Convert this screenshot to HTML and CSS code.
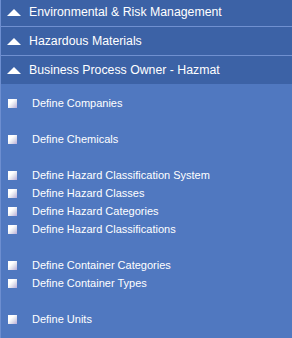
FILE: index.html
```html
<!DOCTYPE html>
<html lang="en">
<head>
  <meta charset="UTF-8">
  <title>Menu</title>
  <link rel="stylesheet" href="styles.css">
</head>
<body>
  <div class="menu">
    <div class="menu-heads">
      <div class="menu-head"><span class="arrow"></span>Environmental &amp; Risk Management</div>
      <div class="menu-head"><span class="arrow"></span>Hazardous Materials</div>
      <div class="menu-head"><span class="arrow"></span>Business Process Owner - Hazmat</div>
    </div>

    <ul class="menu-list">
      <li><span class="box"></span>Define Companies</li>
      <li class="blank"></li>
      <li><span class="box"></span>Define Chemicals</li>
      <li class="blank"></li>
      <li><span class="box"></span>Define Hazard Classification System</li>
      <li><span class="box"></span>Define Hazard Classes</li>
      <li><span class="box"></span>Define Hazard Categories</li>
      <li><span class="box"></span>Define Hazard Classifications</li>
      <li class="blank"></li>
      <li><span class="box"></span>Define Container Categories</li>
      <li><span class="box"></span>Define Container Types</li>
      <li class="blank"></li>
      <li><span class="box"></span>Define Units</li>
    </ul>
  </div>
</body>
</html>
```

FILE: styles.css
```css
body { /* page */
  margin: 0;
  padding: 0;
  background-color: #5078c0;
  font-family: 'Liberation Sans', Arial, sans-serif;
  color: #fff;
}
.menu {
  width: 292px;
  min-height: 338px;
  background-color: #5078c0;
  border-left: 1px solid #6d8ed0;
  box-sizing: border-box;
  overflow: hidden;
}
.menu-heads { /* top is scrolled a bit */
  margin-top: -2px;
}
.menu-head {
  height: 28px;
  line-height: 28px;
  background-color: #3c62a6;
  border-bottom: 1px solid #7090d0;
  font-size: 12.3px;
  padding-left: 28px;
  position: relative;
  white-space: nowrap;
}
.menu-head:last-child {
  border-bottom: none;
}
.arrow { /* white triangle */
  position: absolute;
  left: 6px;
  top: 11px;
  width: 0;
  height: 0;
  border-left: 7px solid transparent;
  border-right: 7px solid transparent;
  border-bottom: 7px solid #fff;
}
.menu-list {
  list-style: none;
  margin: 0;
  padding: 10px 0 0 0;
}
.menu-list li {
  height: 18px;
  line-height: 18px;
  font-size: 11px;
  display: flex;
  align-items: center;
  white-space: nowrap;
}
.box { /* checkbox icon */
  width: 9px;
  height: 9px;
  margin-left: 7px;
  margin-right: 15px;
  background: linear-gradient(135deg, #ffffff 35%, #e4e4ee 60%, #b9acd8 100%);
}
```
